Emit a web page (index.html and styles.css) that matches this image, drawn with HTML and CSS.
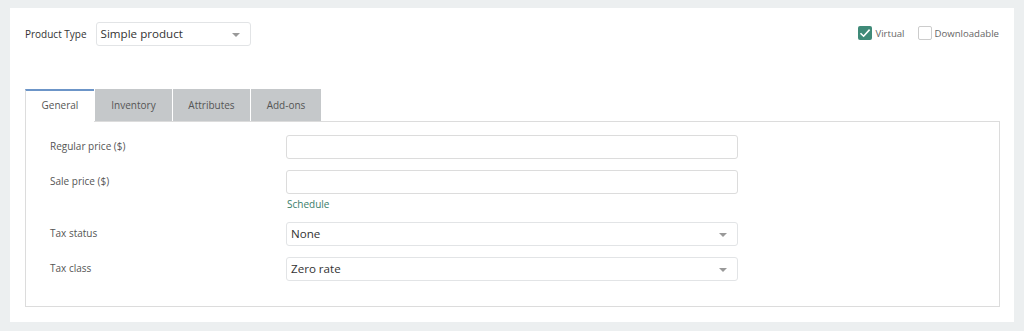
FILE: index.html
```html
<!DOCTYPE html>
<html lang="en">
<head>
    <meta charset="UTF-8">
    <title>Product data</title>
    <link rel="stylesheet" href="styles.css">
</head>
<body>
   <div class="card">
     <div class="top-row">
        <div class="type">
            <span class="type-label">Product Type</span>
            <div class="select type-select">Simple product<span class="arrow"></span></div>
        </div>
        <div class="options">
            <label class="check"><span class="box checked">
                <svg width="14" height="14" viewBox="0 0 14 14"><path d="M2.5 7.2 L5.6 10.2 L11.6 3.6" fill="none" stroke="#fff" stroke-width="1.6"/></svg>
            </span>Virtual</label>
            <label class="check"><span class="box"></span>Downloadable</label>
        </div>
     </div>

     <div class="tabs">
        <div class="tab active">General</div>
        <div class="tab">Inventory</div>
        <div class="tab">Attributes</div>
        <div class="tab">Add-ons</div>
     </div>
     <div class="panel">
        <div class="field">
            <span class="label">Regular price ($)</span>
            <div class="control"><div class="input"></div></div>
        </div>
        <div class="field sale">
            <span class="label">Sale price ($)</span>
            <div class="control">
                <div class="input"></div>
                <a class="schedule">Schedule</a>
            </div>
        </div>
        <div class="field">
            <span class="label">Tax status</span>
            <div class="control"><div class="select">None<span class="arrow"></span></div></div>
        </div>
        <div class="field">
            <span class="label">Tax class</span>
            <div class="control"><div class="select">Zero rate<span class="arrow"></span></div></div>
        </div>
     </div>
   </div>
</body>
</html>
```

FILE: styles.css
```css
*{
    margin: 0;
    padding: 0;
    box-sizing: border-box;
}
body{
    background-color: #eceff0;
    font-family: "Open Sans", "Noto Sans", sans-serif;
    color: #555;
}
.card{
    background-color: #fff;
    margin: 8px 10px 0 10px;
    padding: 14px 14px 15px 15px;
    height: 314px;
}
.top-row{
    display: flex;
    justify-content: space-between;
    align-items: flex-start;
    height: 67px;
}
.type{
    display: flex;
    align-items: center;
}
.type-label{
    font-size: 10px;
    color: #333;
    margin-right: 9px;
}
.select{
    position: relative;
    height: 24px;
    line-height: 22px;
    border: 1px solid #e2e4e6;
    border-radius: 3px;
    padding-left: 4px;
    font-size: 11.6px;
    color: #333;
    background: #fff;
}
.type-select{
    width: 155px;
    padding-left: 4px;
}
.arrow{
    position: absolute;
    right: 10px;
    top: 10px;
    width: 0;
    height: 0;
    border-left: 4px solid transparent;
    border-right: 4px solid transparent;
    border-top: 4px solid #999;
}
.options{
    display: flex;
    gap: 13px;
    margin-top: 4px;
    margin-right: 1px;
}
.check{
    display: flex;
    align-items: center;
    font-size: 9.6px;
    color: #666;
}
.box{
    width: 14px;
    height: 14px;
    border: 1px solid #ccc;
    border-radius: 2px;
    margin-right: 3px;
    display: flex;
}
.box.checked{
    border: none;
    background-color: #3f8a78;
}
.tabs{
    display: flex;
    height: 32px;
    gap: 1px;
}
.tab{
    font-size: 10px;
    line-height: 32px;
    background-color: #c5c8ca;
    color: #555;
    text-align: center;
    width: 77px;
}
.tab.active{
    width: 69px;
    background-color: #fff;
    border-top: 2px solid #6c95c8;
    border-left: 1px solid #ddd;
    line-height: 28px;
    margin-bottom: -1px;
    height: 33px;
    position: relative;
}
.tab:last-child{
    width: 70px;
}
.panel{
    border: 1px solid #dcdcdc;
    height: 186px;
    padding: 13px 24px 0 24px;
}
.field{
    display: flex;
    margin-bottom: 11px;
}
.label{
    width: 236px;
    font-size: 10px;
    line-height: 22px;
    color: #555;
}
.control{
    width: 452px;
}
.input{
    height: 24px;
    border: 1px solid #dcdcdc;
    border-radius: 3px;
}
.sale{
    margin-bottom: 10px;
}
.schedule{
    display: block;
    font-size: 10px;
    line-height: 16px;
    margin-top: 2px;
    padding-left: 1px;
    color: #3a7d6a;
}
```
